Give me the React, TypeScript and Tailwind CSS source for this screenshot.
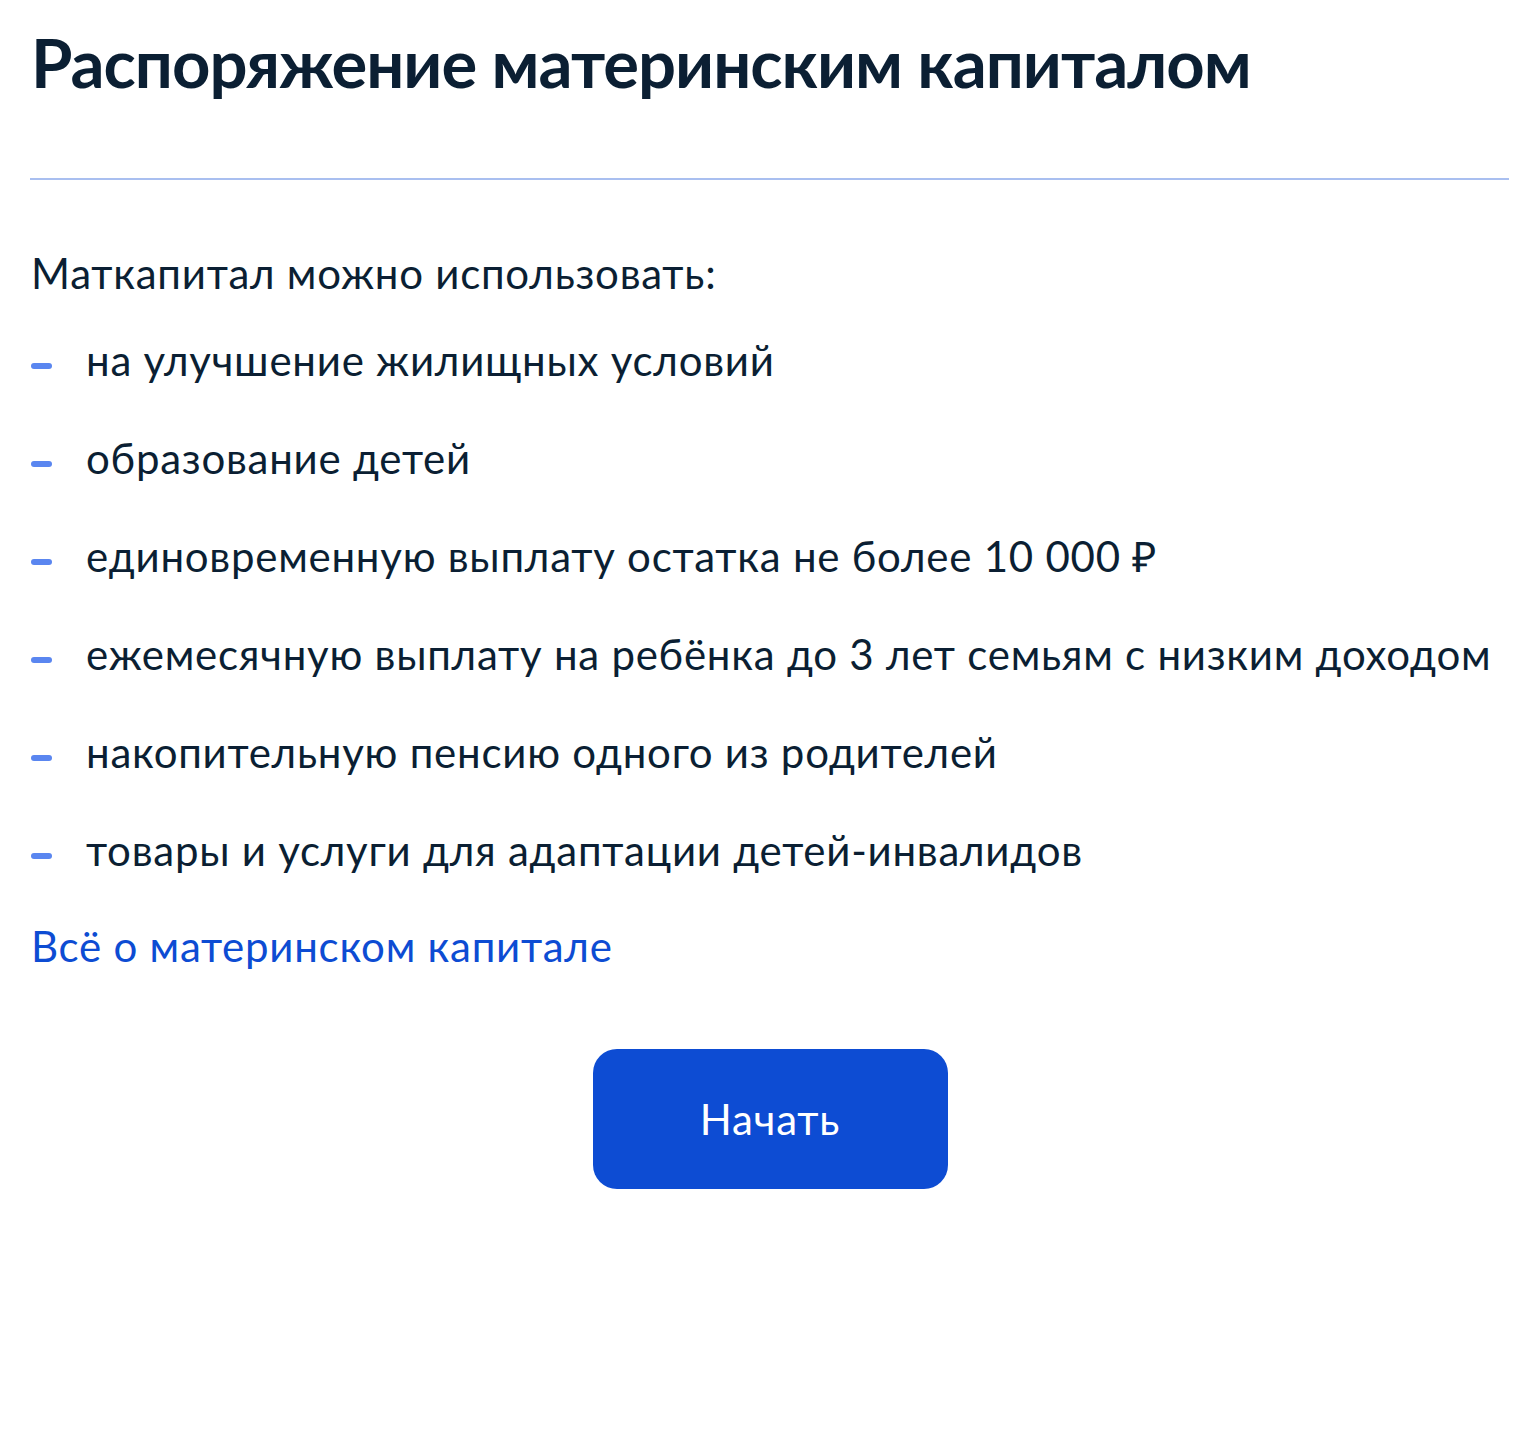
const items = [
  "на улучшение жилищных условий",
  "образование детей",
  "единовременную выплату остатка не более 10 000 ₽",
  "ежемесячную выплату на ребёнка до 3 лет семьям с низким доходом",
  "накопительную пенсию одного из родителей",
  "товары и услуги для адаптации детей-инвалидов",
];

export default function App() {
  return (
    <div className="min-h-[1435px] w-[1540px] bg-white px-[31px] pt-[22px] font-['Lato',sans-serif] text-[#0b1f33]">
      <h1 className="text-[67px] font-bold leading-[80px] tracking-[-1px]">Распоряжение материнским капиталом</h1>

      <div className="mt-[76px] h-[2px] w-[1479px] -ml-[1px] bg-[#a9bff0]" />

      <p className="mt-[68px] text-[42px] leading-[50px] tracking-[0.75px]">Маткапитал можно использовать:</p>

      <ul className="mt-[37px] flex flex-col gap-[48px]">
        {items.map((item) => (
          <li key={item} className="flex items-start text-[42px] leading-[50px] tracking-[0.75px]">
            <span className="mt-[28px] h-[6px] w-[21px] shrink-0 rounded-full bg-[#5a86f0]" />
            <span className="ml-[34px]">{item}</span>
          </li>
        ))}
      </ul>

      <a href="#" className="mt-[46px] block text-[42px] leading-[50px] tracking-[0.75px] text-[#0d4cd3]">
        Всё о материнском капитале
      </a>

      <div className="mt-[78px] flex justify-center">
        <button className="flex h-[140px] w-[355px] items-center justify-center rounded-[24px] bg-[#0d4cd3] text-[42px] leading-[50px] tracking-[0.8px] text-white">
          Начать
        </button>
      </div>
    </div>
  );
}
